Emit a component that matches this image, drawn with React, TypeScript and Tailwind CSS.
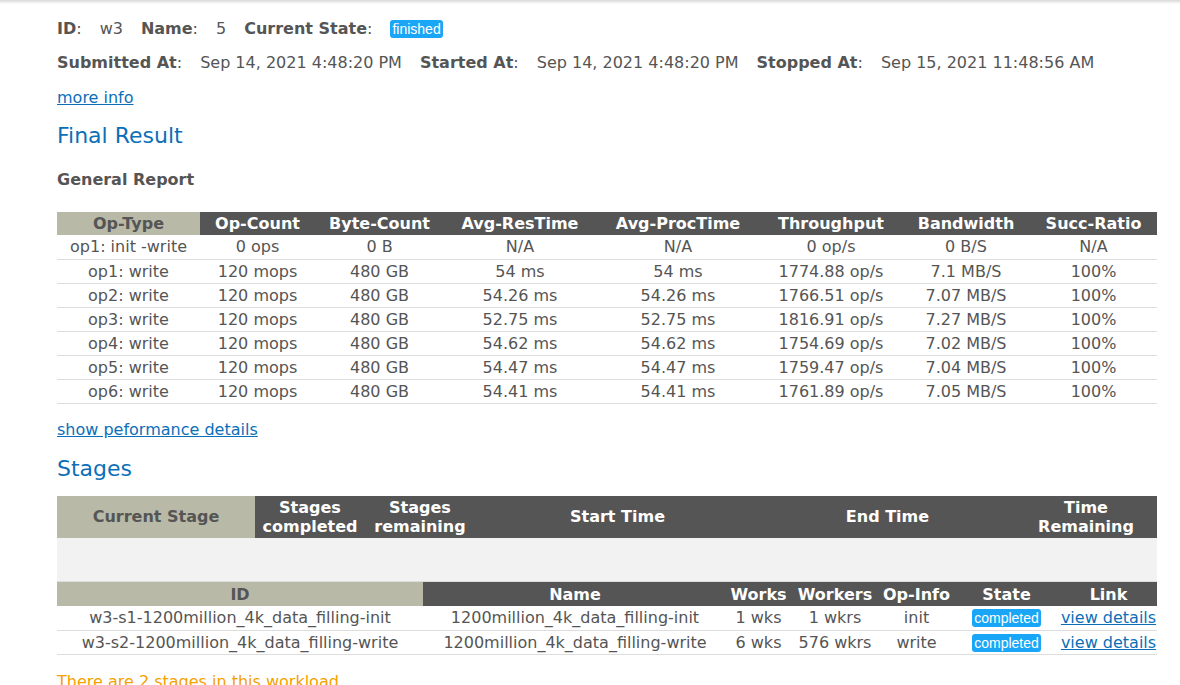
import React from 'react';

const ops = [
  ['op1: init -write', '0 ops', '0 B', 'N/A', 'N/A', '0 op/s', '0 B/S', 'N/A'],
  ['op1: write', '120 mops', '480 GB', '54 ms', '54 ms', '1774.88 op/s', '7.1 MB/S', '100%'],
  ['op2: write', '120 mops', '480 GB', '54.26 ms', '54.26 ms', '1766.51 op/s', '7.07 MB/S', '100%'],
  ['op3: write', '120 mops', '480 GB', '52.75 ms', '52.75 ms', '1816.91 op/s', '7.27 MB/S', '100%'],
  ['op4: write', '120 mops', '480 GB', '54.62 ms', '54.62 ms', '1754.69 op/s', '7.02 MB/S', '100%'],
  ['op5: write', '120 mops', '480 GB', '54.47 ms', '54.47 ms', '1759.47 op/s', '7.04 MB/S', '100%'],
  ['op6: write', '120 mops', '480 GB', '54.41 ms', '54.41 ms', '1761.89 op/s', '7.05 MB/S', '100%'],
];

const reportCols = [
  { label: 'Op-Type', w: 'w-[143px]' },
  { label: 'Op-Count', w: 'w-[115px]' },
  { label: 'Byte-Count', w: 'w-[129px]' },
  { label: 'Avg-ResTime', w: 'w-[152px]' },
  { label: 'Avg-ProcTime', w: 'w-[164px]' },
  { label: 'Throughput', w: 'w-[142px]' },
  { label: 'Bandwidth', w: 'w-[128px]' },
  { label: 'Succ-Ratio', w: 'w-[127px]' },
];

const stages = [
  { id: 'w3-s1-1200million_4k_data_filling-init', name: '1200million_4k_data_filling-init', works: '1 wks', workers: '1 wkrs', op: 'init' },
  { id: 'w3-s2-1200million_4k_data_filling-write', name: '1200million_4k_data_filling-write', works: '6 wks', workers: '576 wkrs', op: 'write' },
];

function Badge({ children }: { children: React.ReactNode }) {
  return (
    <span className="inline-block rounded-[3px] bg-[#1aa6f7] px-[2px] text-[14px] leading-[18px] text-white [font-family:'Liberation_Sans',Arial,sans-serif]">
      {children}
    </span>
  );
}

function Field({ label, value, first }: { label: string; value: React.ReactNode; first?: boolean }) {
  return (
    <>
      <b className={first ? '' : 'ml-[18px]'}>{label}</b>:
      <span className="ml-[18px]">{value}</span>
    </>
  );
}

export default function App() {
  return (
    <div className="min-h-[685px] bg-white text-[16px] text-[#555555] [font-family:'DejaVu_Sans',Verdana,sans-serif]">
      <div className="h-[4px] bg-gradient-to-b from-[#d9d9d9] to-white" />
      <div className="px-[57px]">
        <div className="mt-[15px] flex items-center h-[20px]">
          <Field first label="ID" value="w3" />
          <Field label="Name" value="5" />
          <Field label="Current State" value={<Badge>finished</Badge>} />
        </div>
        <div className="mt-[14px] flex items-center h-[20px]">
          <Field first label="Submitted At" value="Sep 14, 2021 4:48:20 PM" />
          <Field label="Started At" value="Sep 14, 2021 4:48:20 PM" />
          <Field label="Stopped At" value="Sep 15, 2021 11:48:56 AM" />
        </div>
        <div className="mt-[13px] h-[20px]">
          <a href="#" className="text-[#0b6fb8] underline">more info</a>
        </div>
        <h2 className="mt-[16px] text-[22px] leading-[28px] text-[#0b6fb8]">Final Result</h2>
        <h3 className="mt-[20px] font-bold leading-[20px]">General Report</h3>

        <table className="mt-[22px] w-[1100px] table-fixed border-collapse text-center">
          <thead>
            <tr className="h-[23px]">
              {reportCols.map((c, i) => (
                <th key={c.label} className={`${c.w} p-0 font-bold leading-[22px] ${i === 0 ? 'bg-[#b9b9a7] text-[#555555]' : 'bg-[#555555] text-white'}`}>
                  {c.label}
                </th>
              ))}
            </tr>
          </thead>
          <tbody>
            {ops.map((row, r) => (
              <tr key={r} className="h-[24px] border-b border-[#dddddd]">
                {row.map((cell, i) => (
                  <td key={i} className="p-0 leading-[23px]">{cell}</td>
                ))}
              </tr>
            ))}
          </tbody>
        </table>

        <div className="mt-[14px] h-[20px]">
          <a href="#" className="text-[#0b6fb8] underline">show peformance details</a>
        </div>
        <h2 className="mt-[17px] text-[22px] leading-[28px] text-[#0b6fb8]">Stages</h2>

        <table className="mt-[13px] w-[1100px] table-fixed border-collapse text-center">
          <thead>
            <tr className="h-[42px] font-bold leading-[19px]">
              <th className="w-[198px] bg-[#b9b9a7] p-0 text-[#555555]">Current Stage</th>
              <th className="w-[110px] bg-[#555555] p-0 text-white">Stages<br />completed</th>
              <th className="w-[110px] bg-[#555555] p-0 text-white">Stages<br />remaining</th>
              <th className="w-[285px] bg-[#555555] p-0 text-white">Start Time</th>
              <th className="w-[255px] bg-[#555555] p-0 text-white">End Time</th>
              <th className="w-[142px] bg-[#555555] p-0 text-white">Time<br />Remaining</th>
            </tr>
          </thead>
          <tbody>
            <tr className="h-[44px] bg-[#f2f2f2] border-b border-[#dddddd]">
              <td colSpan={6} />
            </tr>
          </tbody>
        </table>

        <table className="w-[1100px] table-fixed border-collapse text-center">
          <thead>
            <tr className="h-[24px] font-bold leading-[23px]">
              <th className="w-[366px] bg-[#b9b9a7] p-0 text-[#555555]">ID</th>
              <th className="w-[304px] bg-[#555555] p-0 text-white">Name</th>
              <th className="w-[63px] bg-[#555555] p-0 text-white">Works</th>
              <th className="w-[90px] bg-[#555555] p-0 text-white">Workers</th>
              <th className="w-[73px] bg-[#555555] p-0 text-white">Op-Info</th>
              <th className="w-[107px] bg-[#555555] p-0 text-white">State</th>
              <th className="w-[97px] bg-[#555555] p-0 text-white">Link</th>
            </tr>
          </thead>
          <tbody>
            {stages.map((s) => (
              <tr key={s.id} className="h-[24px] border-b border-[#dddddd]">
                <td className="p-0 leading-[23px]">{s.id}</td>
                <td className="p-0 leading-[23px]">{s.name}</td>
                <td className="p-0 leading-[23px]">{s.works}</td>
                <td className="p-0 leading-[23px]">{s.workers}</td>
                <td className="p-0 leading-[23px]">{s.op}</td>
                <td className="p-0 leading-[23px]"><Badge>completed</Badge></td>
                <td className="p-0 leading-[23px]">
                  <a href="#" className="text-[#0b6fb8] underline">view details</a>
                </td>
              </tr>
            ))}
          </tbody>
        </table>

        <p className="mt-[17px] leading-[20px] text-[#f5a100]">There are 2 stages in this workload.</p>
      </div>
    </div>
  );
}
